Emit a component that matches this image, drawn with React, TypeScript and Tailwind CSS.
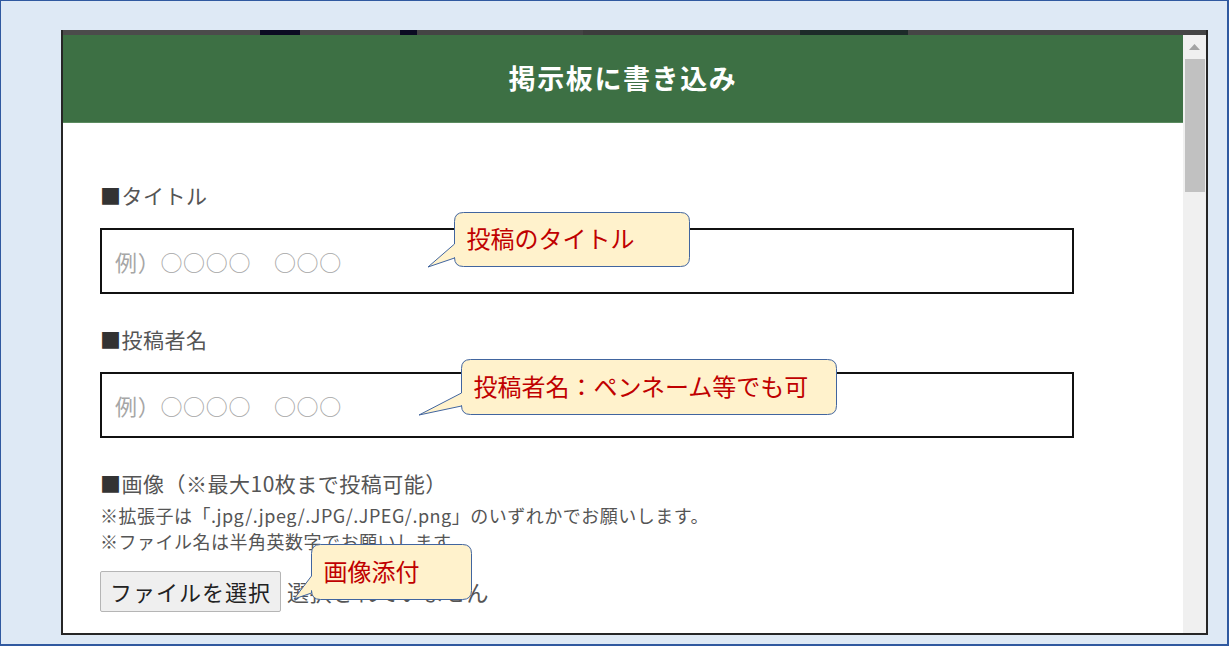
import React from 'react';

const JP = '"Noto Sans CJK JP", "Noto Sans", sans-serif';

type CalloutProps = {
  x0: number;
  y0: number;
  x1: number;
  y1: number;
  ya: number;
  yb: number;
  tx: number;
  ty: number;
  text: string;
};

// Annotation balloon: rounded box with a tail on the left edge
const calloutPath = ({ x0, y0, x1, y1, ya, yb, tx, ty }: CalloutProps) => {
  const r = 9;
  return [
    `M ${x0 + r} ${y0}`,
    `H ${x1 - r}`,
    `Q ${x1} ${y0} ${x1} ${y0 + r}`,
    `V ${y1 - r}`,
    `Q ${x1} ${y1} ${x1 - r} ${y1}`,
    `H ${x0 + r}`,
    `Q ${x0} ${y1} ${x0} ${Math.min(y1 - r, yb)}`,
    `V ${yb}`,
    `L ${tx} ${ty}`,
    `L ${x0} ${ya}`,
    `V ${y0 + r}`,
    `Q ${x0} ${y0} ${x0 + r} ${y0}`,
    'Z',
  ].join(' ');
};

const callouts: CalloutProps[] = [
  { x0: 453.5, y0: 211.5, x1: 688.5, y1: 265.5, ya: 243, yb: 257, tx: 427, ty: 266, text: '投稿のタイトル' },
  { x0: 460.5, y0: 358.5, x1: 835.5, y1: 413.5, ya: 392, yb: 405, tx: 418, ty: 414, text: '投稿者名：ペンネーム等でも可' },
  { x0: 310.5, y0: 543.5, x1: 470.5, y1: 598.5, ya: 575, yb: 592, tx: 293, ty: 598, text: '画像添付' },
];

const strip = [
  { w: 197, c: 'bg-[#4b4b4b]' },
  { w: 40, c: 'bg-[#0b0b22]' },
  { w: 100, c: 'bg-[#4a4a4a]' },
  { w: 17, c: 'bg-[#0b0b22]' },
  { w: 166, c: 'bg-[#444444]' },
  { w: 217, c: 'bg-[#3c3c3c]' },
  { w: 108, c: 'bg-[#1d2b29]' },
  { w: 298, c: 'bg-[#454545]' },
];

const Label: React.FC<{ children: React.ReactNode }> = ({ children }) => (
  <div className="h-[30px] leading-[30px] text-[21px] tracking-[0.5px] text-[#555]">
    <span className="text-[#333]">■</span>
    {children}
  </div>
);

const TextBox: React.FC = () => (
  <input
    type="text"
    placeholder="例）○○○○　○○○"
    className="w-[974px] h-[66px] border-2 border-[#111] bg-white px-[13px] text-[22px] tracking-[0.7px] text-[#333] placeholder:text-[#a6a6a6] outline-none"
    style={{ fontFamily: JP }}
  />
);

export default function App() {
  return (
    <div
      className="relative w-[1229px] h-[646px] overflow-hidden bg-[#dee9f5] border-t border-l border-r-2 border-b-2 border-[#3059a0] pt-[29px] pl-[60px]"
      style={{ fontFamily: JP }}
    >
      <div className="w-[1147px] h-[605px] flex flex-col border-l-2 border-r-2 border-b-2 border-[#262626]">
        {/* page behind the modal */}
        <div className="flex h-[5px] shrink-0">
          {strip.map((s, i) => (
            <div key={i} className={s.c} style={{ width: s.w }} />
          ))}
        </div>

        <div className="flex flex-1 min-h-0">
          <div className="w-[1120px] flex flex-col">
            <div className="h-[88px] shrink-0 bg-[#3d7044] border-b border-[#5b8b60] flex items-center justify-center">
              <h1 className="text-white text-[27px] font-bold tracking-[1.6px]">掲示板に書き込み</h1>
            </div>

            <div className="flex-1 bg-white pl-[37px] pt-[57px] flex flex-col">
              <Label>タイトル</Label>
              <div className="mt-[18px]">
                <TextBox />
              </div>

              <div className="mt-[30px]">
                <Label>投稿者名</Label>
              </div>
              <div className="mt-[18px]">
                <TextBox />
              </div>

              <div className="mt-[30px]">
                <Label>画像（※最大10枚まで投稿可能）</Label>
              </div>
              <div className="mt-[4px] text-[18px] leading-[26px] tracking-[0.5px] text-[#555]">
                <div>※拡張子は「.jpg/.jpeg/.JPG/.JPEG/.png」のいずれかでお願いします。</div>
                <div>※ファイル名は半角英数字でお願いします。</div>
              </div>

              <div className="mt-[17px] flex items-center">
                <button className="h-[41px] w-[181px] bg-[#efefef] border border-[#b5b5b5] rounded-[2px] text-[22px] tracking-[1px] text-[#222]">
                  ファイルを選択
                </button>
                <span className="ml-[6px] text-[22px] tracking-[0.6px] text-[#555]">選択されていません</span>
              </div>
            </div>
          </div>

          {/* scrollbar */}
          <div className="w-[23px] bg-[#f0f0f0] flex flex-col items-start">
            <div className="w-full h-[24px] flex items-center justify-center">
              <svg width="11" height="6" viewBox="0 0 11 6">
                <path d="M0 6 L5.5 0 L11 6 Z" fill="#a3a3a3" />
              </svg>
            </div>
            <div className="ml-[2px] w-[20px] h-[133px] bg-[#c1c1c1]" />
          </div>
        </div>
      </div>

      {/* annotation balloons */}
      <svg className="absolute left-0 top-0 pointer-events-none" width="1229" height="646">
        {callouts.map((c, i) => (
          <path key={i} d={calloutPath(c)} fill="#fff2cc" stroke="#41659f" strokeWidth="1" />
        ))}
      </svg>
      {callouts.map((c, i) => (
        <div
          key={i}
          className="absolute flex items-center pl-[12px] pb-[3px] text-[24px] text-[#c00000] leading-none"
          style={{ left: c.x0, top: c.y0, width: c.x1 - c.x0, height: c.y1 - c.y0 }}
        >
          {c.text}
        </div>
      ))}
    </div>
  );
}
